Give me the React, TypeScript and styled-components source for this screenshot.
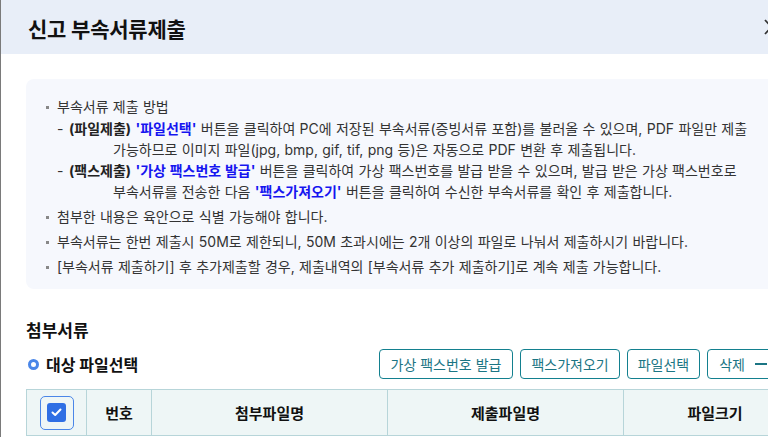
import React from "react";
import styled, { createGlobalStyle } from "styled-components";

const Global = createGlobalStyle`
  html, body { margin: 0; padding: 0; background: #fff; overflow: hidden; }
  body { font-family: Inter, "Noto Sans CJK KR", "Noto Sans", sans-serif; color: #222; }
  * { box-sizing: border-box; }
`;

const Modal = styled.div`
  width: 800px;
  height: 437px;
  border-left: 1px solid #7a7a7a;
  background: #fff;
  overflow: hidden;
`;

const Header = styled.div`
  height: 54px;
  background: #e8eef8;
  display: flex;
  align-items: center;
  justify-content: space-between;
  padding: 0 21px 0 27px;
`;

const Title = styled.h1`
  margin: 0;
  font-size: 21px;
  font-weight: 700;
  color: #111;
  letter-spacing: -0.2px;
  padding-top: 2px;
`;

const CloseBtn = styled.button`
  border: 0;
  background: transparent;
  padding: 0;
  width: 15px;
  height: 16px;
  display: flex;
`;

const Body = styled.div`
  padding: 25px 0 0 25px;
`;

const InfoBox = styled.div`
  background: #f6f8fd;
  border-radius: 8px;
  padding: 17px 20px 8px 20px;
  word-spacing: 0.4px;
`;

const List = styled.ul`
  margin: 0;
  padding: 0;
  list-style: none;
`;

const Item = styled.li`
  position: relative;
  padding-left: 11px;
  font-size: 14px;
  line-height: 21px;
  color: #333;
  margin-bottom: 4px;
  white-space: nowrap;
  &::before {
    content: "";
    position: absolute;
    left: 0;
    top: 10px;
    width: 3px;
    height: 3px;
    background: #888;
  }
`;

const SubList = styled.ul`
  margin: 1px 0 0 0;
  padding: 0;
  list-style: none;
`;

const SubItem = styled.li`
  display: flex;
  font-size: 14px;
  line-height: 21px;
  color: #333;
  white-space: nowrap;
`;

const Dash = styled.span`
  width: 12px;
  flex: none;
`;

const SubText = styled.div``;

const Indent = styled.div`
  padding-left: 44px;
`;

const Strong = styled.b`
  font-weight: 700;
  color: #222;
`;

const Hl = styled.b`
  font-weight: 700;
  color: #1515f0;
`;

const SectionTitle = styled.h2`
  margin: 30px 0 0 0;
  font-size: 17px;
  font-weight: 700;
  color: #111;
  line-height: 24px;
`;

const ToolRow = styled.div`
  display: flex;
  align-items: center;
  justify-content: space-between;
  margin-top: 6px;
  padding-right: 21px;
  height: 30px;
`;

const SubTitle = styled.div`
  display: flex;
  align-items: center;
  gap: 7px;
  font-size: 16px;
  font-weight: 700;
  color: #111;
  padding-left: 2px;
`;

const Ring = styled.span`
  width: 11px;
  height: 11px;
  border-radius: 50%;
  border: 3px solid #4a86e8;
  background: #fff;
`;

const Buttons = styled.div`
  display: flex;
  gap: 7px;
`;

const Btn = styled.button`
  height: 30px;
  padding: 0 ${(p: { $tight?: boolean }) => (p.$tight ? "10px" : "11px")};
  border: 1px solid #13808f;
  border-radius: 4px;
  background: #fff;
  color: #1b7584;
  font-family: inherit;
  font-size: 14px;
  display: flex;
  align-items: center;
  gap: 10px;
  white-space: nowrap;
`;

const Table = styled.table`
  margin-top: 10px;
  border-collapse: collapse;
  width: 780px;
  table-layout: fixed;
`;

const Th = styled.th`
  height: 46px;
  background: #eef6f6;
  border: 1px solid #b7d5d9;
  font-size: 15px;
  font-weight: 700;
  color: #111;
  text-align: center;
`;

const CheckWrap = styled.span`
  display: inline-flex;
  align-items: center;
  justify-content: center;
  width: 34px;
  height: 34px;
  border: 1px solid #4a86e8;
  border-radius: 5px;
  vertical-align: middle;
`;

const CheckBox = styled.span`
  width: 19px;
  height: 19px;
  background: #2f6fe4;
  border-radius: 3px;
  display: flex;
  align-items: center;
  justify-content: center;
`;

export default function App() {
  return (
    <>
      <Global />
      <Modal>
        <Header>
          <Title>신고 부속서류제출</Title>
          <CloseBtn aria-label="닫기">
            <svg width="15" height="16" viewBox="0 0 15 16">
              <path d="M1 1 L14 15 M14 1 L1 15" stroke="#333" strokeWidth="1.8" />
            </svg>
          </CloseBtn>
        </Header>
        <Body>
          <InfoBox>
            <List>
              <Item>
                부속서류 제출 방법
                <SubList>
                  <SubItem>
                    <Dash>-</Dash>
                    <SubText>
                      <Strong>(파일제출)</Strong> <Hl>'파일선택'</Hl> 버튼을 클릭하여 PC에 저장된 부속서류(증빙서류 포함)를 불러올 수 있으며, PDF 파일만 제출
                      <Indent>가능하므로 이미지 파일(jpg, bmp, gif, tif, png 등)은 자동으로 PDF 변환 후 제출됩니다.</Indent>
                    </SubText>
                  </SubItem>
                  <SubItem>
                    <Dash>-</Dash>
                    <SubText>
                      <Strong>(팩스제출)</Strong> <Hl>'가상 팩스번호 발급'</Hl> 버튼을 클릭하여 가상 팩스번호를 발급 받을 수 있으며, 발급 받은 가상 팩스번호로
                      <Indent>
                        부속서류를 전송한 다음 <Hl>'팩스가져오기'</Hl> 버튼을 클릭하여 수신한 부속서류를 확인 후 제출합니다.
                      </Indent>
                    </SubText>
                  </SubItem>
                </SubList>
              </Item>
              <Item>첨부한 내용은 육안으로 식별 가능해야 합니다.</Item>
              <Item>부속서류는 한번 제출시 50M로 제한되니, 50M 초과시에는 2개 이상의 파일로 나눠서 제출하시기 바랍니다.</Item>
              <Item>[부속서류 제출하기] 후 추가제출할 경우, 제출내역의 [부속서류 추가 제출하기]로 계속 제출 가능합니다.</Item>
            </List>
          </InfoBox>
          <SectionTitle>첨부서류</SectionTitle>
          <ToolRow>
            <SubTitle>
              <Ring />
              대상 파일선택
            </SubTitle>
            <Buttons>
              <Btn>가상 팩스번호 발급</Btn>
              <Btn $tight>팩스가져오기</Btn>
              <Btn $tight>파일선택</Btn>
              <Btn>
                삭제
                <svg width="12" height="2" viewBox="0 0 12 2">
                  <rect width="12" height="2" fill="#1b7584" />
                </svg>
              </Btn>
            </Buttons>
          </ToolRow>
          <Table>
            <colgroup>
              <col style={{ width: 60 }} />
              <col style={{ width: 65 }} />
              <col style={{ width: 236 }} />
              <col style={{ width: 236 }} />
              <col style={{ width: 183 }} />
            </colgroup>
            <thead>
              <tr>
                <Th>
                  <CheckWrap>
                    <CheckBox>
                      <svg width="11" height="9" viewBox="0 0 11 9">
                        <path d="M1.5 4.5 L4.2 7 L9.5 1.5" stroke="#fff" strokeWidth="2" fill="none" strokeLinecap="round" strokeLinejoin="round" />
                      </svg>
                    </CheckBox>
                  </CheckWrap>
                </Th>
                <Th>번호</Th>
                <Th>첨부파일명</Th>
                <Th>제출파일명</Th>
                <Th>파일크기</Th>
              </tr>
            </thead>
          </Table>
        </Body>
      </Modal>
    </>
  );
}
